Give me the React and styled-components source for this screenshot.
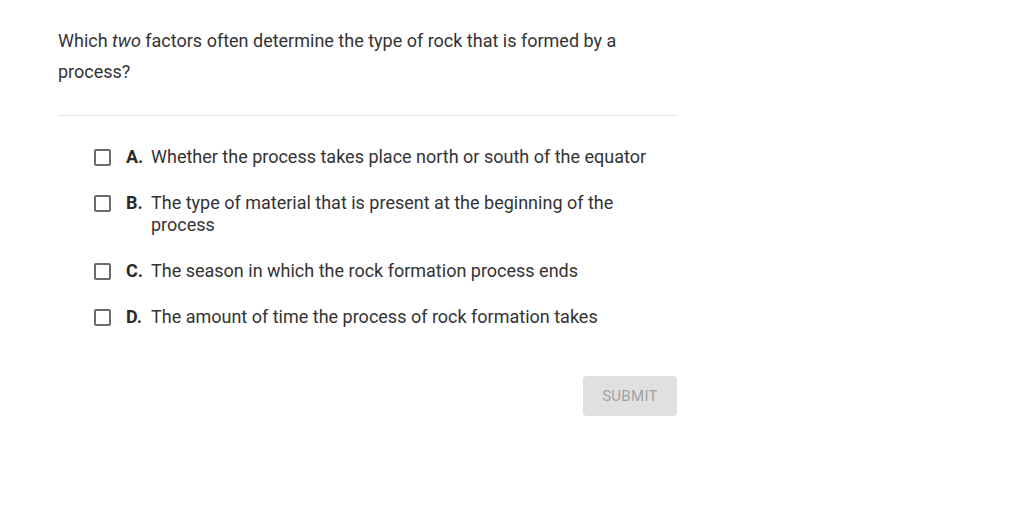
import styled, { createGlobalStyle } from 'styled-components';

const GlobalStyle = createGlobalStyle`
  body {
    margin: 0;
    background: #ffffff;
    font-family: Roboto, "Liberation Sans", Arial, sans-serif;
  }
`;

const Container = styled.div`
  width: 619px;
  padding: 25px 0 0 58px;
  display: flex;
  flex-direction: column;
`;

const Question = styled.p`
  margin: 0;
  font-size: 18px;
  line-height: 31px;
  color: #333333;
`;

const Divider = styled.hr`
  margin: 28px 0 0;
  border: none;
  border-top: 1px solid #e4e4e4;
`;

const Options = styled.ul`
  list-style: none;
  margin: 30px 0 0;
  padding: 0 18px 0 36px;
  display: flex;
  flex-direction: column;
  gap: 24px;
`;

const Option = styled.li`
  display: flex;
  align-items: flex-start;
  font-size: 18px;
  line-height: 22px;
  color: #333333;
  cursor: pointer;
`;

const Box = styled.span`
  flex: none;
  width: 13px;
  height: 13px;
  margin-top: 3px;
  border: 2px solid #6a6a6a;
  border-radius: 2px;
`;

const Letter = styled.span`
  flex: none;
  margin-left: 15px;
  width: 25px;
  font-weight: 700;
  color: #2a2a2a;
`;

const Text = styled.span`
  flex: 1;
`;

const Footer = styled.div`
  display: flex;
  justify-content: flex-end;
  margin-top: 48px;
`;

const SubmitButton = styled.button`
  width: 94px;
  height: 40px;
  border: none;
  border-radius: 4px;
  background: #e0e0e0;
  color: #a3a3a3;
  font-family: Roboto, "Liberation Sans", Arial, sans-serif;
  font-size: 15px;
  letter-spacing: 0.3px;
  cursor: default;
`;

const choices = [
  { key: 'A', text: 'Whether the process takes place north or south of the equator' },
  { key: 'B', text: 'The type of material that is present at the beginning of the process' },
  { key: 'C', text: 'The season in which the rock formation process ends' },
  { key: 'D', text: 'The amount of time the process of rock formation takes' },
];

export default function App() {
  return (
    <>
      <GlobalStyle />
      <Container>
        <Question>
          Which <em>two</em> factors often determine the type of rock that is formed by a process?
        </Question>
        <Divider />
        <Options>
          {choices.map((c) => (
            <Option key={c.key}>
              <Box />
              <Letter>{c.key}.</Letter>
              <Text>{c.text}</Text>
            </Option>
          ))}
        </Options>
        <Footer>
          <SubmitButton type="button" disabled>SUBMIT</SubmitButton>
        </Footer>
      </Container>
    </>
  );
}
